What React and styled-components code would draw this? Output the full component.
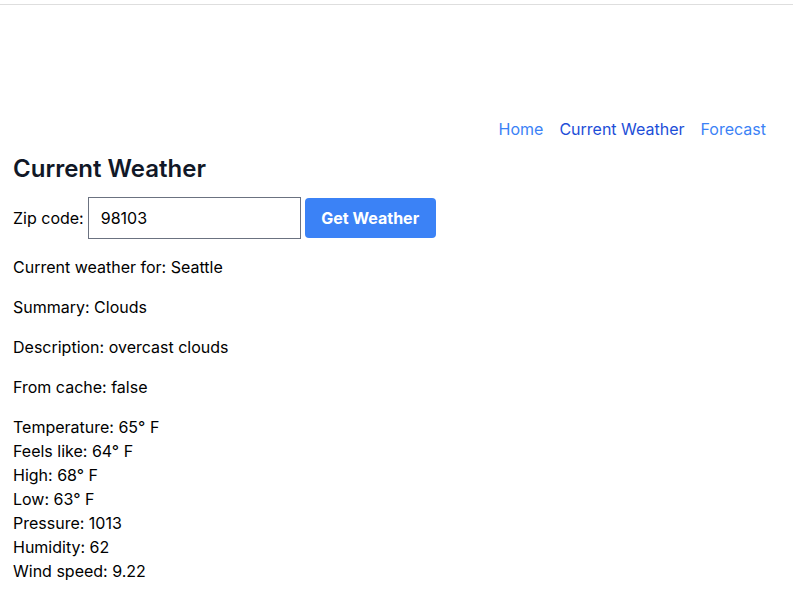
import React from "react";
import styled, { createGlobalStyle } from "styled-components";

const Global = createGlobalStyle`
  html, body { margin: 0; padding: 0; background: #fff; }
  body { font-family: Inter, "Noto Sans", sans-serif; color: #000; font-size: 16px; line-height: 24px; }
  * { box-sizing: border-box; }
`;

const Frame = styled.div`
  margin-top: 4px;
  border-top: 1px solid #dedede;
  padding: 112px 13px 20px 13px;
`;

const Nav = styled.nav`
  display: flex;
  justify-content: flex-end;
  gap: 16px;
  padding-right: 14px;
`;

const NavLink = styled.a`
  color: ${(p) => (p.$active ? "#1d4ed8" : "#3b82f6")};
  text-decoration: none;
  font-size: 16px;
  line-height: 24px;
`;

const Title = styled.h1`
  margin: 12px 0 0 0;
  font-size: 24px;
  line-height: 32px;
  font-weight: 600;
  color: #111827;
`;

const Form = styled.form`
  display: flex;
  align-items: center;
  margin-top: 12px;
`;

const Label = styled.label`
  margin-right: 4px;
`;

const Input = styled.input`
  width: 213px;
  height: 42px;
  border: 1px solid #6b7280;
  padding: 0 12px;
  font-family: inherit;
  font-size: 16px;
  color: #000;
  outline: none;
`;

const Button = styled.button`
  margin-left: 4px;
  height: 40px;
  width: 131px;
  background: #3b82f6;
  color: #fff;
  border: none;
  border-radius: 4px;
  font-family: inherit;
  font-weight: 700;
  font-size: 16px;
`;

const Para = styled.p`
  margin: 16px 0 0 0;
`;

const Details = styled.div`
  margin-top: 16px;
`;

const Line = styled.div``;

export default function App() {
  const details = [
    "Temperature: 65° F",
    "Feels like: 64° F",
    "High: 68° F",
    "Low: 63° F",
    "Pressure: 1013",
    "Humidity: 62",
    "Wind speed: 9.22",
  ];
  return (
    <>
      <Global />
      <Frame>
        <Nav>
          <NavLink href="#">Home</NavLink>
          <NavLink href="#" $active>Current Weather</NavLink>
          <NavLink href="#">Forecast</NavLink>
        </Nav>
        <Title>Current Weather</Title>
        <Form onSubmit={(e) => e.preventDefault()}>
          <Label>Zip code:</Label>
          <Input defaultValue="98103" />
          <Button type="submit">Get Weather</Button>
        </Form>
        <Para>Current weather for: Seattle</Para>
        <Para>Summary: Clouds</Para>
        <Para>Description: overcast clouds</Para>
        <Para>From cache: false</Para>
        <Details>
          {details.map((d) => (
            <Line key={d}>{d}</Line>
          ))}
        </Details>
      </Frame>
    </>
  );
}
